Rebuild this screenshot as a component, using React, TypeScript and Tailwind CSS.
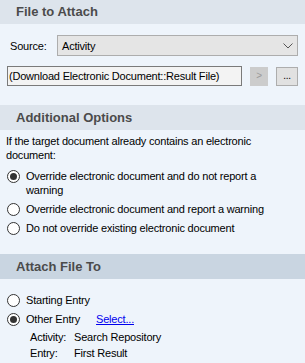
import React from "react";

function SectionHeader({ title, dark }: { title: string; dark?: boolean }) {
  return (
    <div
      className={`flex h-[25px] items-center pl-4 text-[13px] font-bold tracking-normal text-[#4b4b4b] ${
        dark ? "bg-[#c9d5e1]" : "bg-[#dde4ec]"
      }`}
    >
      {title}
    </div>
  );
}

function Radio({ checked }: { checked?: boolean }) {
  return (
    <span className="flex h-[13px] w-[13px] shrink-0 items-center justify-center rounded-full border border-[#333333] bg-white">
      {checked && <span className="h-[7px] w-[7px] rounded-full bg-[#333333]" />}
    </span>
  );
}

function RadioRow({ checked, children }: { checked?: boolean; children: React.ReactNode }) {
  return (
    <div className="flex items-start pl-[7px]">
      <span className="flex h-[14px] items-center">
        <Radio checked={checked} />
      </span>
      <div className="ml-[6px]">{children}</div>
    </div>
  );
}

export default function App() {
  return (
    <div
      className="h-[363px] w-[305px] overflow-hidden bg-[#eef4fb] text-[11px] leading-[14px] tracking-[-0.2px] text-black"
      style={{ fontFamily: '"Liberation Sans", Arial, sans-serif' }}
    >
      <div className="flex h-[24px] items-center bg-[#dde4ec] pl-4 text-[13px] font-bold tracking-normal text-[#4b4b4b]">
        File to Attach
      </div>

      <div className="pt-[11px]">
        <div className="flex items-center">
          <span className="w-[57px] pl-[10px]">Source:</span>
          <div className="flex h-[21px] w-[241px] items-center justify-between border border-[#adadad] bg-[#e5e5e5] pl-[4px] pr-[4px]">
            <span>Activity</span>
            <svg width="10" height="6" viewBox="0 0 10 6" fill="none">
              <path d="M0.5 0.5 L5 5 L9.5 0.5" stroke="#555" strokeWidth="1" />
            </svg>
          </div>
        </div>
        <div className="mt-[10px] flex items-center">
          <div className="ml-[7px] flex h-[20px] w-[235px] items-center whitespace-nowrap border border-[#7a7a7a] bg-[#f3f3f3] pl-[1px]">
            (Download Electronic Document::Result File)
          </div>
          <div className="ml-[8px] flex h-[19px] w-[18px] items-center justify-center border border-[#cccccc] bg-[#cccccc] text-[10px] text-[#9a9a9a]">
            &gt;
          </div>
          <div className="ml-[8px] flex h-[19px] w-[22px] items-center justify-center border border-[#adadad] bg-[#e1e1e1] text-[10px]">
            ...
          </div>
        </div>
      </div>

      <div className="mt-[19px]">
        <SectionHeader title="Additional Options" />
      </div>
      <div className="pl-[6px] pt-[4px]">
        If the target document already contains an electronic
        <br />
        document:
      </div>
      <div className="mt-[7px] flex flex-col gap-[5px]">
        <RadioRow checked>
          Override electronic document and do not report a
          <br />
          warning
        </RadioRow>
        <RadioRow>Override electronic document and report a warning</RadioRow>
        <RadioRow>Do not override existing electronic document</RadioRow>
      </div>

      <div className="mt-[19px]">
        <SectionHeader title="Attach File To" dark />
      </div>
      <div className="mt-[14px] flex flex-col gap-[5px]">
        <RadioRow>Starting Entry</RadioRow>
        <RadioRow checked>
          <span>Other Entry</span>
          <a className="ml-[16px] text-[#0000ee] underline">Select...</a>
        </RadioRow>
      </div>
      <div className="mt-[4px] flex flex-col gap-[2px] pl-[30px]">
        <div className="flex">
          <span className="w-[44px]">Activity:</span>
          <span>Search Repository</span>
        </div>
        <div className="flex">
          <span className="w-[44px]">Entry:</span>
          <span>First Result</span>
        </div>
      </div>
    </div>
  );
}
